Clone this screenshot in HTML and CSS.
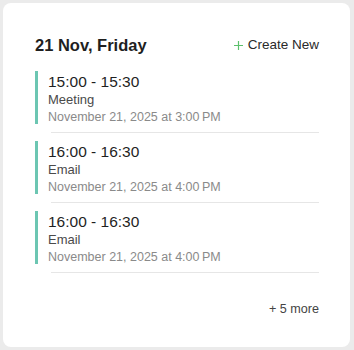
FILE: index.html
```html
<!DOCTYPE html>
<html>
<head>
<meta charset="utf-8">
<link rel="stylesheet" href="styles.css">
</head>
<body>
<div class="card">
  <div class="header">
    <div class="title">21 Nov, Friday</div>
    <div class="create"><svg class="plus" width="9" height="9" viewBox="0 0 9 9"><path d="M4.5 0v9M0 4.5h9" stroke="#5cc06c" stroke-width="1.2" fill="none"/></svg><span>Create New</span></div>
  </div>
  <div class="list">
    <div class="item">
      <div class="ev">
        <div class="time">15:00 - 15:30</div>
        <div class="name">Meeting</div>
        <div class="date">November 21, 2025 at 3:00&#8239;PM</div>
      </div>
      <div class="sep"></div>
    </div>
    <div class="item">
      <div class="ev">
        <div class="time">16:00 - 16:30</div>
        <div class="name">Email</div>
        <div class="date">November 21, 2025 at 4:00&#8239;PM</div>
      </div>
      <div class="sep"></div>
    </div>
    <div class="item">
      <div class="ev">
        <div class="time">16:00 - 16:30</div>
        <div class="name">Email</div>
        <div class="date">November 21, 2025 at 4:00&#8239;PM</div>
      </div>
      <div class="sep"></div>
    </div>
  </div>
  <div class="more">+ 5 more</div>
</div>
</body>
</html>
```
FILE: styles.css
```css
html, body {
  margin: 0;
  padding: 0;
  background: #ebebeb;
  font-family: "Liberation Sans", Arial, sans-serif;
}
body {
  padding: 3px 4px 3px 3px;
  width: 354px;
  height: 350px;
  box-sizing: border-box;
}
.card {
  background: #fff;
  border-radius: 8px;
  height: 344px;
  box-sizing: border-box;
  padding: 32px 31px 0 32px;
  display: flex;
  flex-direction: column;
}
.header {
  display: flex;
  justify-content: space-between;
  align-items: center;
  height: 20px;
}
.title {
  font-size: 16.5px;
  line-height: 20px;
  font-weight: 700;
  color: #1f1f1f;
}
.create {
  display: flex;
  align-items: center;
  gap: 5px;
  font-size: 13.5px;
  line-height: 20px;
  color: #2a2a2a;
}
.plus {
  display: block;
}
.list {
  margin-top: 16px;
  display: flex;
  flex-direction: column;
  gap: 8px;
}
.ev {
  border-left: 3px solid #6cc6b2;
  padding-left: 10px;
  height: 53px;
  box-sizing: border-box;
}
.time {
  font-size: 15.5px;
  line-height: 21px;
  color: #1f1f1f;
}
.name {
  font-size: 13px;
  line-height: 15px;
  color: #4a4a4a;
}
.date {
  padding-top: 3px;
  font-size: 12.5px;
  line-height: 14px;
  color: #8a8a8a;
}
.sep {
  margin: 8px 0 0 16px;
  height: 1px;
  background: #e6e6e6;
}
.more {
  margin-top: 28px;
  align-self: flex-end;
  font-size: 12.6px;
  line-height: 16px;
  color: #444;
}
```
